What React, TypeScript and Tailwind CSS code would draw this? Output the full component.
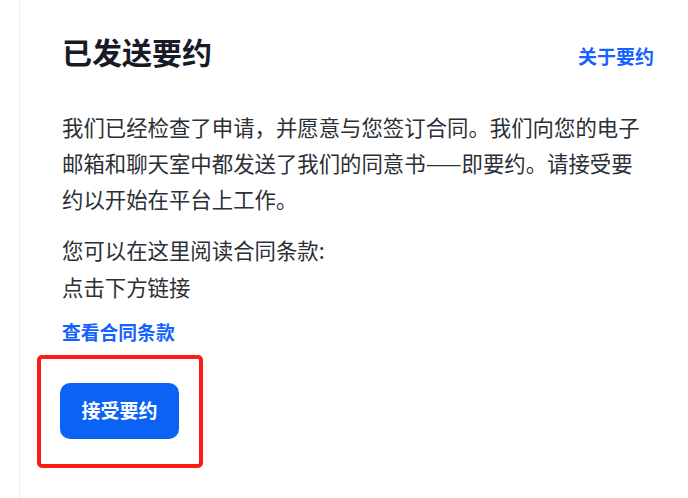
import React from "react";

const OfferSent: React.FC = () => {
  return (
    <div className="w-[688px] h-[498px] bg-white overflow-hidden font-['Noto_Sans_CJK_SC','Noto_Sans',sans-serif]">
      <div className="ml-[19px] h-full border-l border-[#ececec] pl-[42px] pr-[34px] pt-[33px]">
        {/* header */}
        <div className="flex items-baseline justify-between">
          <h1 className="text-[30px] leading-[36px] font-bold text-[#161b26]">已发送要约</h1>
          <a href="#" className="text-[19px] font-bold text-[#1662ff]">
            关于要约
          </a>
        </div>

        <p className="mt-[38px] w-[584px] text-[21.4px] leading-[36px] text-[#2b2f36]">
          我们已经检查了申请，并愿意与您签订合同。我们向您的电子邮箱和聊天室中都发送了我们的同意书——即要约。请接受要约以开始在平台上工作。
        </p>

        <p className="mt-[14px] text-[21.4px] leading-[37px] text-[#2b2f36]">
          您可以在这里阅读合同条款:
          <br />
          点击下方链接
        </p>

        <a href="#" className="block mt-[13px] text-[18.8px] leading-[28px] font-bold text-[#1662ff]">
          查看合同条款
        </a>

        <div className="relative mt-[37px] -ml-[2px] w-[119px]">
          <button className="w-[119px] h-[56px] rounded-[10px] bg-[#0b63f6] text-white text-[19px] font-bold">
            接受要约
          </button>
          {/* highlight annotation */}
          <div className="absolute -left-[23px] -top-[28px] w-[166px] h-[113px] border-[4px] border-[#ff1a12] rounded-[5px] pointer-events-none" />
        </div>
      </div>
    </div>
  );
};

export default function App() {
  return <OfferSent />;
}
